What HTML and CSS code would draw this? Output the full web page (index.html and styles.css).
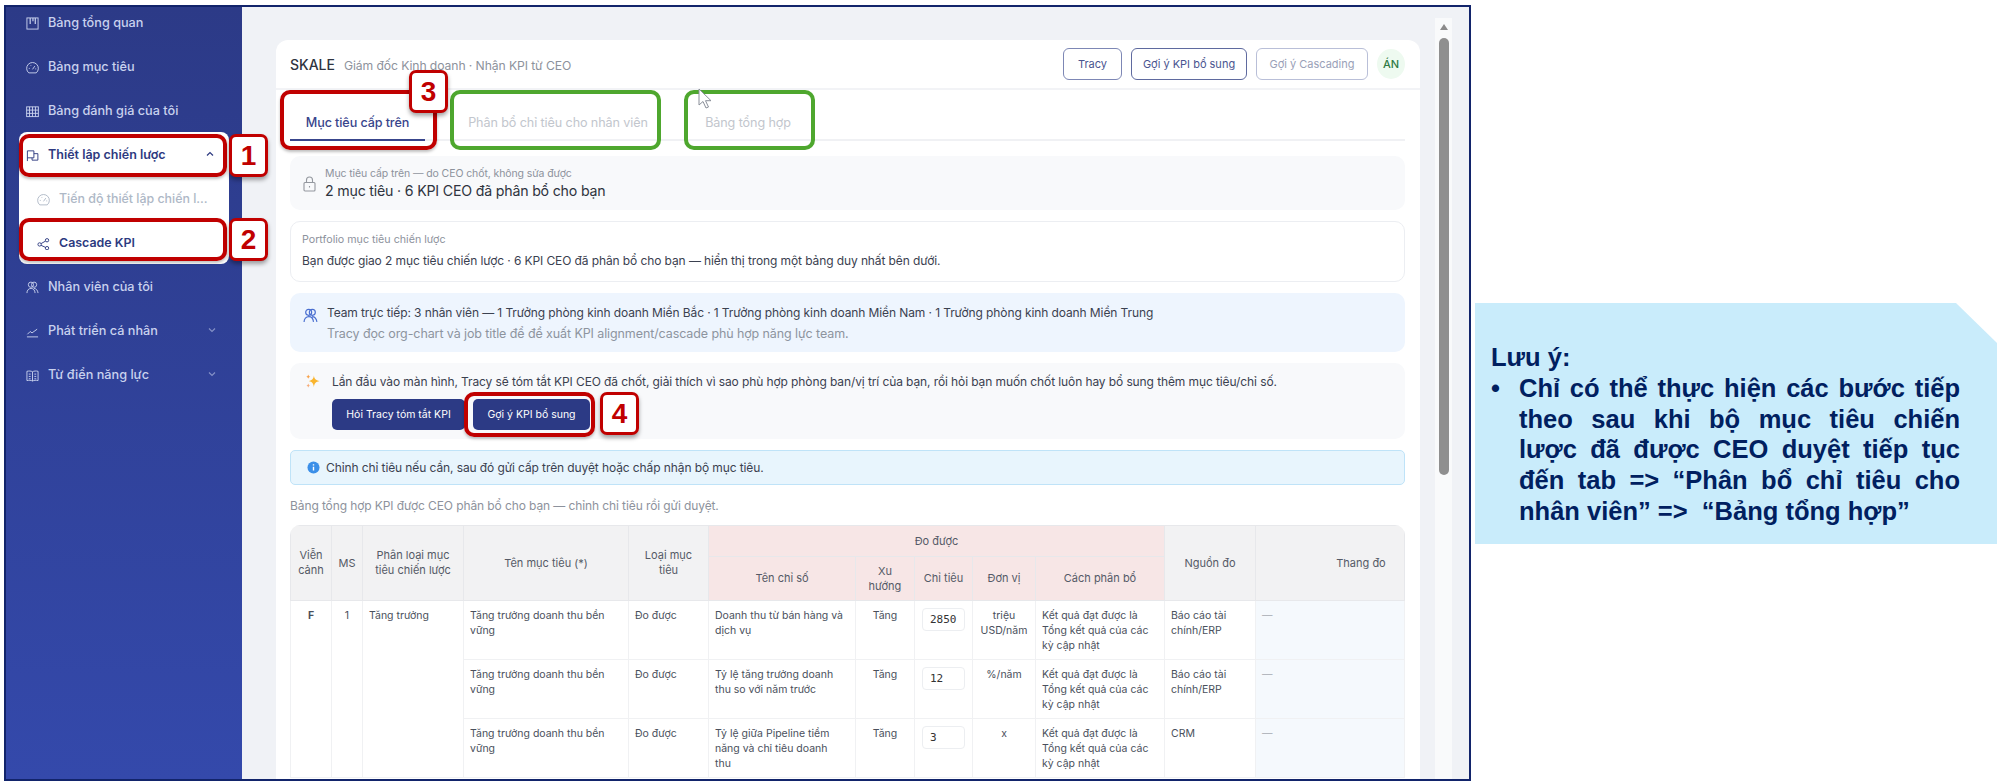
FILE: index.html
```html
<!DOCTYPE html>
<html lang="vi">
<head>
    <meta charset="UTF-8">
    <title>Cascade KPI</title>
    <link rel="stylesheet" href="styles.css">
</head>
<body>
    <div class="frame">
        <aside class="sidebar">
            <a class="nav-item">
                <svg class="nav-icon" viewBox="0 0 14 14"><rect x="1" y="1" width="12" height="12"/><path d="M4.500 1v6.500M7.500 1v3.500M10 1v6.500" stroke-width="1.300"/></svg>
                <span>Bảng tổng quan</span>
            </a>
            <a class="nav-item">
                <svg class="nav-icon" viewBox="0 0 14 14"><path d="M3 12.800a6.300 6.300 0 1 1 8 0z"/><path d="M7 9l2.500-3.500M3 8h1M10 8.500h1M5 4.500l.5.7"/></svg>
                <span>Bảng mục tiêu</span>
            </a>
            <a class="nav-item">
                <svg class="nav-icon" viewBox="0 0 14 14"><rect x="0.700" y="2" width="12.600" height="10.500"/><path d="M0.700 5.500h12.600M0.700 9h12.600M3.800 2v10.500M7 2v10.500M10.200 2v10.500"/></svg>
                <span>Bảng đánh giá của tôi</span>
            </a>
            <a class="nav-item nav-open">
                <svg class="nav-icon" viewBox="0 0 14 14"><path d="M1.500 13V2h7v7.500h-7M8.500 5h4.300v7H6.500V9.500"/></svg>
                <span>Thiết lập chiến lược</span>
                <svg class="nav-chev" viewBox="0 0 10 10"><path d="M2 6.500L5 3.500L8 6.500"/></svg>
            </a>
            <div class="submenu">
                <a class="sub-item sub-muted">
                    <svg class="nav-icon" viewBox="0 0 14 14"><path d="M3 12.800a6.300 6.300 0 1 1 8 0z"/><path d="M7 9l2.500-3.500M3 8h1M10 8.500h1M5 4.500l.5.7"/></svg>
                    <span class="sub-label">Tiến độ thiết lập chiến lược</span>
                </a>
                <a class="sub-item">
                    <svg class="nav-icon" viewBox="0 0 14 14"><circle cx="2.800" cy="8" r="1.800"/><circle cx="10.800" cy="3.500" r="1.800"/><circle cx="10.800" cy="12" r="1.800"/><path d="M4.400 7.100l4.800-2.700M4.400 9l4.800 2.200"/></svg>
                    <span class="sub-label">Cascade KPI</span>
                </a>
            </div>
            <a class="nav-item">
                <svg class="nav-icon" viewBox="0 0 14 14"><circle cx="5.300" cy="4" r="2.800"/><circle cx="8.700" cy="4" r="2.800"/><path d="M1 13c0-3 1.800-5 4.500-5s4 2 4.300 5M8.500 8c2.500 0 4 2 4.500 5"/></svg>
                <span>Nhân viên của tôi</span>
            </a>
            <a class="nav-item">
                <svg class="nav-icon" viewBox="0 0 14 14"><path d="M1.500 10l3-3 2 1.500L12 4.500M1 12.800h12"/></svg>
                <span>Phát triển cá nhân</span>
                <svg class="nav-chev chev-dim" viewBox="0 0 10 10"><path d="M2 3.500L5 6.500L8 3.500"/></svg>
            </a>
            <a class="nav-item">
                <svg class="nav-icon" viewBox="0 0 14 14"><path d="M7 3C5.500 2 3 2 1 2.500v10c2-.5 4.500-.5 6 .5 1.500-1 4-1 6-.5v-10C11 2 8.500 2 7 3zM7 3v10M3 5.500h2M3 8h2M3 10.500h2M9 5.500h2M9 8h2M9 10.500h2"/></svg>
                <span>Từ điển năng lực</span>
                <svg class="nav-chev chev-dim" viewBox="0 0 10 10"><path d="M2 3.500L5 6.500L8 3.500"/></svg>
            </a>
        </aside>

        <main class="main">
            <div class="card">
                <header class="card-head">
                    <div class="head-title"><strong>SKALE</strong><span>Giám đốc Kinh doanh · Nhận KPI từ CEO</span></div>
                    <div class="head-actions">
                        <button class="btn-outline">Tracy</button>
                        <button class="btn-outline btn-wide">Gợi ý KPI bổ sung</button>
                        <button class="btn-outline btn-off">Gợi ý Cascading</button>
                        <span class="avatar">ÁN</span>
                    </div>
                </header>

                <div class="card-body">
                    <nav class="tabs">
                        <a class="tab tab-active">Mục tiêu cấp trên</a>
                        <a class="tab">Phân bổ chỉ tiêu cho nhân viên</a>
                        <a class="tab">Bảng tổng hợp</a>
                    </nav>

                    <section class="panel panel-lock">
                        <svg class="lock-icon" viewBox="0 0 13 16"><rect x="1" y="6.500" width="11" height="8.500" rx="1"/><path d="M3.500 6.500V4a3 3 0 0 1 6 0v2.500M6.500 10v1.500"/></svg>
                        <div>
                            <div class="lock-label">Mục tiêu cấp trên — do CEO chốt, không sửa được</div>
                            <div class="lock-value">2 mục tiêu · 6 KPI CEO đã phân bổ cho bạn</div>
                        </div>
                    </section>

                    <section class="panel panel-portfolio">
                        <div class="port-label">Portfolio mục tiêu chiến lược</div>
                        <div class="port-text">Bạn được giao 2 mục tiêu chiến lược · 6 KPI CEO đã phân bổ cho bạn — hiển thị trong một bảng duy nhất bên dưới.</div>
                    </section>

                    <section class="panel panel-team">
                        <svg class="team-icon" viewBox="0 0 14 14"><circle cx="5.300" cy="4" r="2.800"/><circle cx="8.700" cy="4" r="2.800"/><path d="M1 13c0-3 1.800-5 4.500-5s4 2 4.300 5M8.500 8c2.500 0 4 2 4.500 5"/></svg>
                        <div>
                            <div class="team-line">Team trực tiếp: 3 nhân viên — 1 Trưởng phòng kinh doanh Miền Bắc · 1 Trưởng phòng kinh doanh Miền Nam · 1 Trưởng phòng kinh doanh Miền Trung</div>
                            <div class="team-line team-muted">Tracy đọc org-chart và job title để đề xuất KPI alignment/cascade phù hợp năng lực team.</div>
                        </div>
                    </section>

                    <section class="panel panel-tracy">
                        <svg class="spark-icon" viewBox="0 0 16 16"><path d="M9.500 1.500c.5 3.500 1.800 5 6 6-4.200 1-5.500 2.500-6 6.500-.5-4-1.800-5.500-5.500-6.500 3.700-1 5-2.500 5.500-6z" fill="#f9b52e"/><path d="M3.500 .5c.3 1.400.9 2 2.300 2.300-1.400.3-2 .9-2.300 2.300-.3-1.400-.9-2-2.300-2.300 1.400-.3 2-.9 2.300-2.300z" fill="#f9a24a"/><path d="M3.500 10c.3 1.400.9 2 2.300 2.300-1.400.3-2 .9-2.300 2.300-.3-1.400-.9-2-2.300-2.300 1.400-.3 2-.9 2.300-2.300z" fill="#f7ab76"/></svg>
                        <div>
                            <div class="tracy-text">Lần đầu vào màn hình, Tracy sẽ tóm tắt KPI CEO đã chốt, giải thích vì sao phù hợp phòng ban/vị trí của bạn, rồi hỏi bạn muốn chốt luôn hay bổ sung thêm mục tiêu/chỉ số.</div>
                            <div class="tracy-actions">
                                <button class="btn-solid btn-ask">Hỏi Tracy tóm tắt KPI</button>
                                <button class="btn-solid btn-more">Gợi ý KPI bổ sung</button>
                            </div>
                        </div>
                    </section>

                    <section class="panel panel-info">
                        <svg class="info-icon" viewBox="0 0 14 14"><circle cx="7" cy="7" r="6.500" fill="#3b8fe8"/><path d="M7 6.200v4M7 3.600v1.200" stroke="#fff" stroke-width="1.500"/></svg>
                        <span>Chỉnh chỉ tiêu nếu cần, sau đó gửi cấp trên duyệt hoặc chấp nhận bộ mục tiêu.</span>
                    </section>

                    <p class="caption">Bảng tổng hợp KPI được CEO phân bổ cho bạn — chỉnh chỉ tiêu rồi gửi duyệt.</p>

                    <div class="table-wrap">
                        <table class="kpi-table">
                            <colgroup>
                                <col class="c-horizon"><col class="c-ms"><col class="c-type"><col class="c-name"><col class="c-kind">
                                <col class="c-metric"><col class="c-trend"><col class="c-target"><col class="c-unit"><col class="c-method">
                                <col class="c-source"><col class="c-scale">
                            </colgroup>
                            <thead>
                                <tr class="head-top">
                                    <th rowspan="2">Viễn cảnh</th>
                                    <th rowspan="2">MS</th>
                                    <th rowspan="2" class="th-wrap">Phân loại mục tiêu chiến lược</th>
                                    <th rowspan="2">Tên mục tiêu (*)</th>
                                    <th rowspan="2" class="th-wrap">Loại mục tiêu</th>
                                    <th colspan="5" class="th-measure">Đo được</th>
                                    <th rowspan="2">Nguồn đo</th>
                                    <th rowspan="2" class="th-scale">Thang đo</th>
                                </tr>
                                <tr class="head-sub">
                                    <th class="th-measure">Tên chỉ số</th>
                                    <th class="th-measure th-wrap">Xu hướng</th>
                                    <th class="th-measure">Chỉ tiêu</th>
                                    <th class="th-measure">Đơn vị</th>
                                    <th class="th-measure">Cách phân bổ</th>
                                </tr>
                            </thead>
                            <tbody>
                                <tr>
                                    <td rowspan="3" class="td-center td-bold">F</td>
                                    <td rowspan="3" class="td-center">1</td>
                                    <td rowspan="3">Tăng trưởng</td>
                                    <td>Tăng trưởng doanh thu bền vững</td>
                                    <td>Đo được</td>
                                    <td class="td-metric">Doanh thu từ bán hàng và dịch vụ</td>
                                    <td class="td-center">Tăng</td>
                                    <td class="td-center"><input class="target-input" value="2850"></td>
                                    <td class="td-center">triệu USD/năm</td>
                                    <td>Kết quả đạt được là Tổng kết quả của các kỳ cập nhật</td>
                                    <td>Báo cáo tài chính/ERP</td>
                                    <td class="td-scale">—</td>
                                </tr>
                                <tr>
                                    <td>Tăng trưởng doanh thu bền vững</td>
                                    <td>Đo được</td>
                                    <td class="td-metric">Tỷ lệ tăng trưởng doanh thu so với năm trước</td>
                                    <td class="td-center">Tăng</td>
                                    <td class="td-center"><input class="target-input" value="12"></td>
                                    <td class="td-center">%/năm</td>
                                    <td>Kết quả đạt được là Tổng kết quả của các kỳ cập nhật</td>
                                    <td>Báo cáo tài chính/ERP</td>
                                    <td class="td-scale">—</td>
                                </tr>
                                <tr>
                                    <td>Tăng trưởng doanh thu bền vững</td>
                                    <td>Đo được</td>
                                    <td class="td-metric">Tỷ lệ giữa Pipeline tiềm năng và chỉ tiêu doanh thu</td>
                                    <td class="td-center">Tăng</td>
                                    <td class="td-center"><input class="target-input" value="3"></td>
                                    <td class="td-center">x</td>
                                    <td>Kết quả đạt được là Tổng kết quả của các kỳ cập nhật</td>
                                    <td>CRM</td>
                                    <td class="td-scale">—</td>
                                </tr>
                            </tbody>
                        </table>
                    </div>
                </div>
            </div>

            <div class="scrollbar">
                <span class="scroll-arrow"></span>
                <span class="scroll-thumb"></span>
            </div>
        </main>
    </div>

    <aside class="note">
        <div class="note-title">Lưu ý:</div>
        <div class="note-item">
            <span class="note-bullet">•</span>
            <div class="note-text">
                <span class="note-line">Chỉ có thể thực hiện các bước tiếp</span>
                <span class="note-line">theo sau khi bộ mục tiêu chiến</span>
                <span class="note-line">lược đã được CEO duyệt tiếp tục</span>
                <span class="note-line">đến tab =&gt; “Phân bổ chỉ tiêu cho</span>
                <span class="note-line note-last">nhân viên” =&gt;&nbsp; “Bảng tổng hợp”</span>
            </div>
        </div>
    </aside>

    <!-- chu thich do ve de len anh chup -->
    <div class="mark mark-red m-step1"></div>
    <div class="mark mark-red m-step2"></div>
    <div class="mark mark-red m-step3"></div>
    <div class="mark mark-red m-step4"></div>
    <div class="mark mark-green m-tab2"></div>
    <div class="mark mark-green m-tab3"></div>
    <div class="badge b-step1">1</div>
    <div class="badge b-step2">2</div>
    <div class="badge b-step3">3</div>
    <div class="badge b-step4">4</div>
    <svg class="cursor" viewBox="0 0 14 22"><path d="M1 1v16l4-3.500 3 6.500 2.500-1-3-6.300h5.500z" fill="#fff" stroke="#8a8f99" stroke-width="1"/></svg>
</body>
</html>
```

FILE: styles.css
```css
* {
    box-sizing: border-box;
}
html, body {
    height: 784px;
    overflow: hidden;
}
body {
    position: relative;
    margin: 0;
    padding: 5px 2px 3px 4px;
    display: flex;
    align-items: flex-start;
    background: #fff;
    font-family: Inter, "Noto Sans", sans-serif;
    color: #3b4150;
}
button {
    font-family: inherit;
    cursor: pointer;
}

/* khung anh chup */
.frame {
    width: 1467px;
    height: 776px;
    border: 2px solid #12246b;
    display: flex;
    overflow: hidden;
    flex: none;
}

/* sidebar */
.sidebar {
    width: 236px;
    flex: none;
    padding: 0 13px;
    background: linear-gradient(180deg, #2c3a87 0%, #3449ab 100%);
}
.nav-item {
    display: flex;
    align-items: center;
    height: 44px;
    padding-left: 7px;
    color: #c9d2ee;
    font-size: 12.7px;
    font-weight: 500;
}
.nav-item:first-child {
    margin-top: -7px;
}
.nav-icon {
    width: 13px;
    height: 13px;
    margin: 3px 9px 0 0;
    flex: none;
    fill: none;
    stroke: currentColor;
    stroke-width: 1;
}
.nav-chev {
    width: 10px;
    height: 10px;
    margin-left: auto;
    margin-right: 14px;
    fill: none;
    stroke: currentColor;
    stroke-width: 1.2;
}
.chev-dim {
    opacity: 0.55;
    margin-right: 12px;
}
.nav-open {
    background: #fff;
    color: #2d3a80;
    font-size: 12.5px;
    font-weight: 600;
    border-radius: 8px 8px 0 0;
}
.submenu {
    background: #fff;
    border-radius: 0 0 8px 8px;
    height: 88px;
}
.sub-item {
    display: flex;
    align-items: center;
    height: 44px;
    padding-left: 18px;
    color: #2d3a80;
    font-size: 12.4px;
    font-weight: 600;
}
.sub-muted {
    color: #aeb8c6;
    font-weight: 500;
}
.sub-label {
    width: 152px;
    white-space: nowrap;
    overflow: hidden;
    text-overflow: ellipsis;
}

/* vung noi dung */
.main {
    flex: 1;
    display: flex;
    background: #f0f2f6;
    padding: 11px 17px 0 34px;
}
.card {
    width: 1144px;
    flex: none;
    margin-top: 22px;
    background: #fff;
    border-radius: 12px 12px 0 0;
}
.scrollbar {
    width: 17px;
    margin-left: 15px;
    display: flex;
    flex-direction: column;
    align-items: center;
    background: #f9fafb;
}
.scroll-arrow {
    margin-top: 6px;
    border-left: 4px solid transparent;
    border-right: 4px solid transparent;
    border-bottom: 6px solid #8b8b8b;
}
.scroll-thumb {
    width: 10px;
    height: 437px;
    margin-top: 8px;
    border-radius: 5px;
    background: #8f8f8f;
}
.card-head {
    display: flex;
    align-items: center;
    justify-content: space-between;
    height: 50px;
    padding: 0 15px 0 14px;
    border-bottom: 2px solid #f2f3f6;
}
.head-title {
    display: flex;
    align-items: baseline;
    gap: 9px;
}
.head-title strong {
    font-size: 14px;
    font-weight: 500;
    color: #2f3440;
}
.head-title span {
    font-size: 12.2px;
    color: #8d929c;
    letter-spacing: -0.1px;
}
.head-actions {
    display: flex;
    align-items: center;
    gap: 9px;
}
.btn-outline {
    height: 32px;
    width: 59px;
    padding: 0;
    background: #fff;
    border: 1px solid #7d87b5;
    border-radius: 6px;
    color: #4a5590;
    font-size: 11px;
    font-weight: 400;
}
.btn-wide {
    width: 116px;
    border-color: #5f6a9f;
}
.btn-off {
    width: 112px;
    border-color: #b9bfd8;
    color: #9aa1b8;
}
.avatar {
    width: 28px;
    height: 30px;
    border-radius: 50%;
    background: #eefaf0;
    color: #2f7a44;
    font-size: 11px;
    font-weight: 500;
    display: flex;
    align-items: center;
    justify-content: center;
}
.card-body {
    padding: 0 15px 0 14px;
    display: flex;
    flex-direction: column;
    gap: 11px;
}

/* tabs */
.tabs {
    display: flex;
    height: 51px;
    margin-bottom: 4px;
    border-bottom: 2px solid #f0f1f4;
}
.tab {
    padding-top: 25px;
    text-align: center;
    font-size: 12.6px;
    color: #c2c6cd;
    letter-spacing: -0.1px;
    white-space: nowrap;
}
.tab:first-child {
    width: 135px;
    margin-right: 43px;
}
.tab:nth-child(2) {
    width: 180px;
    margin-right: 57px;
}
.tab:nth-child(3) {
    width: 86px;
}
.tab-active {
    color: #38458c;
    font-weight: 500;
    height: 51px;
    border-bottom: 2px solid #38458c;
}

/* cac khoi */
.panel {
    border-radius: 10px;
}
.panel-lock {
    display: flex;
    align-items: center;
    gap: 9px;
    height: 54px;
    padding-left: 13px;
    background: #f8f9fb;
}
.lock-icon {
    width: 13px;
    height: 16px;
    margin-top: 2px;
    fill: none;
    stroke: #94989f;
    stroke-width: 1.1;
}
.lock-label {
    font-size: 10.5px;
    line-height: 15px;
    color: #8d929c;
    letter-spacing: -0.1px;
}
.lock-value {
    font-size: 14.2px;
    line-height: 20px;
    color: #2f3440;
    letter-spacing: -0.2px;
}
.panel-portfolio {
    height: 61px;
    padding: 10px 11px;
    border: 1px solid #eceef2;
}
.port-label {
    font-size: 10.7px;
    line-height: 15px;
    color: #8d929c;
}
.port-text {
    margin-top: 5px;
    font-size: 12px;
    line-height: 18px;
    color: #3b4150;
    letter-spacing: -0.1px;
}
.panel-team {
    display: flex;
    gap: 9px;
    height: 59px;
    padding: 9px 13px;
    background: #eef5fe;
}
.team-icon {
    width: 15px;
    height: 15px;
    margin-top: 6px;
    flex: none;
    fill: none;
    stroke: #4a6fd0;
    stroke-width: 1.1;
}
.team-line {
    font-size: 12px;
    line-height: 21px;
    color: #3b4150;
    letter-spacing: -0.1px;
}
.team-muted {
    font-size: 12.5px;
    color: #8d949f;
}
.panel-tracy {
    display: flex;
    gap: 12px;
    height: 76px;
    padding: 10px 15px 0;
    background: #f8f9fb;
}
.spark-icon {
    width: 15px;
    height: 15px;
    margin-top: 1px;
    flex: none;
}
.tracy-text {
    font-size: 12px;
    line-height: 18px;
    color: #3b4150;
    letter-spacing: -0.1px;
    white-space: nowrap;
}
.tracy-actions {
    display: flex;
    gap: 8px;
    margin-top: 8px;
}
.btn-solid {
    height: 31px;
    padding: 0;
    border: none;
    border-radius: 5px;
    background: #2c3a85;
    color: #fff;
    font-size: 10.5px;
    font-weight: 400;
}
.btn-ask {
    width: 133px;
}
.btn-more {
    width: 117px;
}
.panel-info {
    display: flex;
    align-items: center;
    gap: 6px;
    height: 35px;
    padding-left: 16px;
    background: #e8f5fd;
    border: 1px solid #bfe3f8;
    border-radius: 5px;
    font-size: 12px;
    color: #3b4150;
    letter-spacing: -0.1px;
}
.info-icon {
    width: 13px;
    height: 13px;
}
.caption {
    margin: 1px 0 -1px;
    font-size: 12px;
    line-height: 18px;
    color: #8d929c;
    letter-spacing: -0.1px;
}

/* bang KPI */
.table-wrap {
    border-radius: 10px 10px 0 0;
    overflow: hidden;
}
.kpi-table {
    width: 1114px;
    table-layout: fixed;
    border-collapse: collapse;
    font-size: 10.5px;
    line-height: 15px;
    color: #4a505c;
}
.c-horizon { width: 41px; }
.c-ms { width: 31px; }
.c-type { width: 101px; }
.c-name { width: 165px; }
.c-kind { width: 80px; }
.c-metric { width: 147px; }
.c-trend { width: 59px; }
.c-target { width: 58px; }
.c-unit { width: 63px; }
.c-method { width: 129px; }
.c-source { width: 91px; }
.c-scale { width: 149px; }
.kpi-table th {
    padding: 0 4px;
    background: #f2f2f3;
    border: 1px solid #e7e8eb;
    font-size: 11px;
    font-weight: 400;
    color: #555a66;
}
.kpi-table .th-wrap {
    padding: 0 12px;
}
.kpi-table .th-scale {
    padding-left: 66px;
}
.kpi-table .th-measure {
    background: #f7e6e6;
}
.head-top {
    height: 31px;
}
.head-sub {
    height: 44px;
}
.kpi-table td {
    height: 59px;
    padding: 7px 6px 0;
    vertical-align: top;
    border: 1px solid #f0f1f3;
}
.kpi-table .td-metric {
    padding-right: 10px;
}
.td-center {
    text-align: center;
}
.td-bold {
    font-weight: 700;
}
.kpi-table .td-scale {
    background: #f5f9fd;
    color: #a5a9b1;
}
.target-input {
    width: 43px;
    height: 23px;
    padding: 0 7px;
    border: 1px solid #eceef1;
    border-radius: 4px;
    background: #fff;
    font-family: "DejaVu Sans Mono", monospace;
    font-size: 11px;
    color: #333;
}

/* ghi chu ben phai */
.note {
    width: 522px;
    height: 241px;
    margin: 298px 0 0 4px;
    flex: none;
    padding: 39px 37px 0 16px;
    background: #c9ecfb;
    clip-path: polygon(0 0, 481px 0, 100% 40px, 100% 100%, 0 100%);
    color: #002060;
    font-family: "Liberation Sans", Arial, sans-serif;
    font-size: 25.5px;
    font-weight: 700;
    line-height: 30.8px;
}
.note-item {
    display: flex;
}
.note-bullet {
    width: 28px;
    flex: none;
}
.note-text {
    flex: 1;
}
.note-line {
    display: block;
    white-space: nowrap;
    text-align: justify;
    text-align-last: justify;
}
.note-last {
    text-align-last: left;
}

/* chu thich ve de */
.mark {
    position: absolute;
    border-radius: 10px;
    pointer-events: none;
}
.mark-red {
    border: 4px solid #c00000;
    box-shadow: 0 2px 3px rgba(0, 0, 0, 0.25);
}
.mark-green {
    border: 4px solid #4ea72e;
}
.m-step1 { left: 19px; top: 134px; width: 208px; height: 43px; }
.m-step2 { left: 19px; top: 218px; width: 208px; height: 43px; }
.m-step3 { left: 280px; top: 90px; width: 157px; height: 60px; }
.m-step4 { left: 464px; top: 392px; width: 131px; height: 45px; }
.m-tab2 { left: 450px; top: 90px; width: 211px; height: 60px; }
.m-tab3 { left: 684px; top: 90px; width: 131px; height: 60px; }
.badge {
    position: absolute;
    width: 39px;
    height: 43px;
    display: flex;
    align-items: center;
    justify-content: center;
    background: #fff;
    border: 3px solid #c00000;
    border-radius: 7px;
    box-shadow: 0 3px 4px rgba(0, 0, 0, 0.35);
    color: #c00000;
    font-family: "Liberation Sans", Arial, sans-serif;
    font-size: 28px;
    font-weight: 700;
}
.b-step1 { left: 229px; top: 134px; }
.b-step2 { left: 229px; top: 218px; }
.b-step3 { left: 409px; top: 70px; }
.b-step4 { left: 600px; top: 392px; }
.cursor {
    position: absolute;
    left: 698px;
    top: 88px;
    width: 14px;
    height: 22px;
}
```
